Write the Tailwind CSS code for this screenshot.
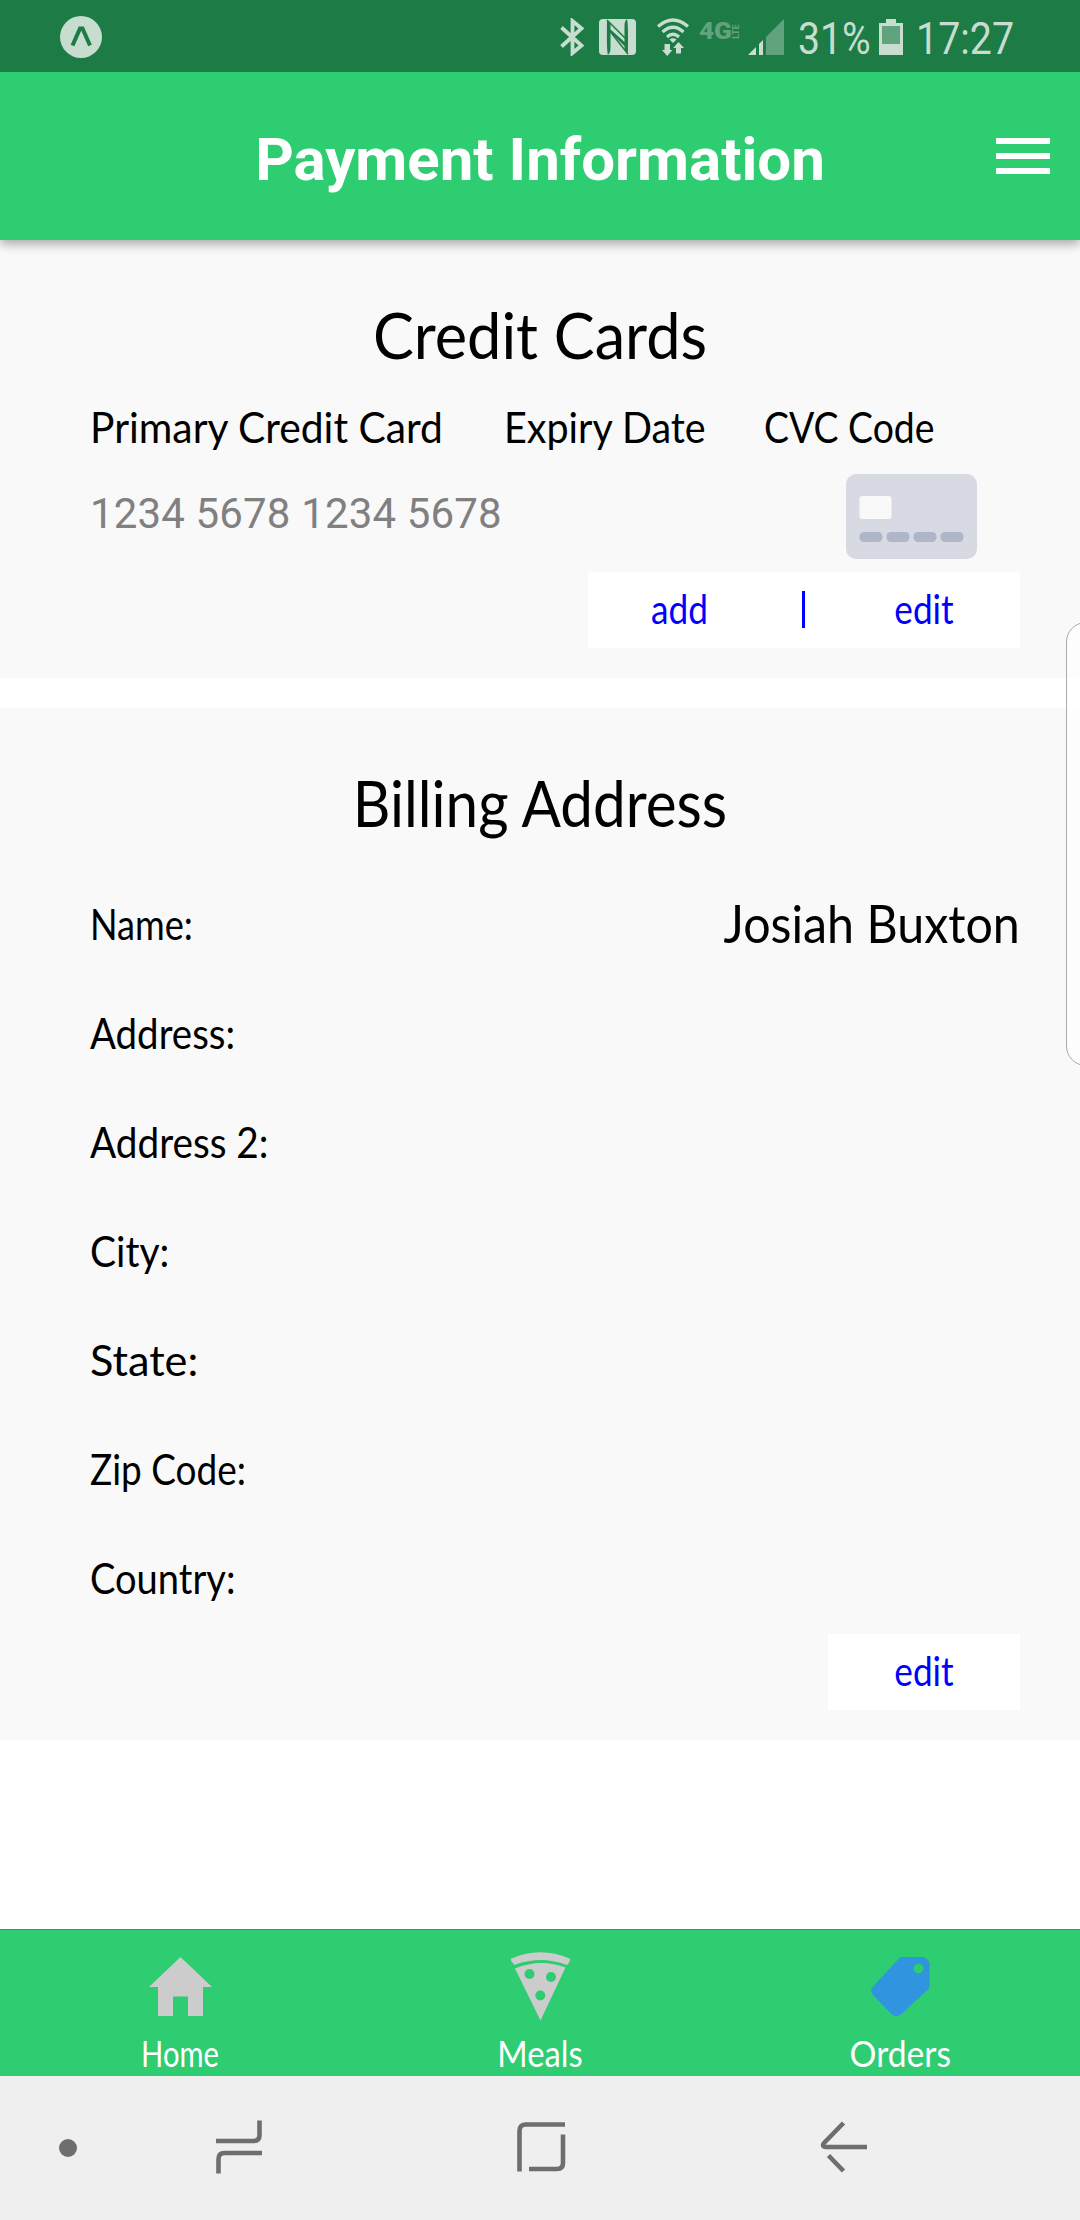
<!DOCTYPE html>
<html lang="en">
<head>
<meta charset="utf-8">
<title>Payment Information</title>
<script src="https://cdn.jsdelivr.net/npm/@tailwindcss/browser@4"></script>
</head>
<body class="w-[1080px] h-[2220px] overflow-hidden bg-white text-black font-['Lato',sans-serif] relative flex flex-col">

<!-- Status bar -->
<div class="h-[72px] shrink-0 bg-[#1d7b46] flex items-start relative z-20 text-[#c6ddcf] font-['Roboto',sans-serif]">
  <svg class="ml-[60px] mt-4 w-[42px] h-[42px]" viewBox="0 0 42 42"><circle cx="21" cy="21" r="21" fill="#c6ddcf"/><path d="M12.500 29.500L20 12.500H22.500L30 29.500" fill="none" stroke="#1d7b46" stroke-width="4"/></svg>
  <svg class="ml-[458px] mt-[18px] w-6 h-[38px]" viewBox="0 0 24 38" fill="none" stroke="#c6ddcf" stroke-width="3.800"><path d="M1.500 9.500L21.500 27.500L12.500 35V3L21.500 10.500L1.500 28.500"/></svg>
  <svg class="ml-[15px] mt-[19px] w-[37px] h-9" viewBox="0 0 37 36"><rect width="37" height="36" rx="4" fill="#c6ddcf"/><path d="M8 1L11.500 5V29C11.500 33 10.500 34.500 9 36C7.500 30 8 8 8 1ZM29 35L25.500 31V7C25.500 3 26.500 1.500 28 0C29.500 6 29 28 29 35ZM11.500 10.500L25.500 23V27L11.500 13.500Z" fill="#1d7b46"/><path d="M8 1L26 19M11.500 13L29 35" fill="none" stroke="#1d7b46" stroke-width="1.500"/></svg>
  <svg class="ml-[21px] mt-[18px] w-8 h-[38px]" viewBox="0 0 32 38" fill="none" stroke="#c6ddcf" stroke-width="3.200"><path d="M1 8.500Q16 -4.500 31 8.500M5.500 14Q16 4.500 26.500 14M10 19Q16 13.500 22 19"/><path d="M12.500 21.500Q16 19 19.500 21.500L16 25Z" fill="#c6ddcf" stroke="none"/><path d="M7.500 26H13V32H15.500L10.200 38L5 32H7.500ZM19 35.500H24V30H27L21.500 24L16.200 30H19Z" fill="#c6ddcf" stroke="none"/></svg>
  <div class="ml-[10px] mt-[23px] w-[41px] h-[17px] relative text-[#61a37c]">
    <span class="absolute left-0 top-0 text-[23px] leading-[17px] font-black origin-left scale-x-[1.130]">4G</span>
    <span class="absolute left-[27px] top-0 w-5 text-center text-[9px] leading-[17px] font-bold -rotate-90">LTE</span>
  </div>
  <svg class="ml-2 mt-[19px] w-9 h-9" viewBox="0 0 36 36"><path d="M0 36L8 28V36ZM11 36V25L15 21V36Z" fill="#c6ddcf"/><path d="M18 36V18L36 0V36Z" fill="#61a37c"/></svg>
  <span class="ml-[14px] mt-[12px] w-[72px] text-[45px] leading-[53px] whitespace-nowrap origin-left scale-x-[0.870]">31%</span>
  <svg class="ml-[9px] mt-[19px] w-6 h-9" viewBox="0 0 24 36"><path d="M7 0H17V4H24V36H0V4H7Z" fill="#c6ddcf"/><path d="M3 7H21V25H3Z" fill="#61a37c"/></svg>
  <span class="ml-[13px] mt-[12px] text-[45px] leading-[53px] whitespace-nowrap origin-left scale-x-[0.875]">17:27</span>
</div>

<!-- Header -->
<header class="h-[168px] shrink-0 bg-[#2ecd71] shadow-[0_4px_10px_rgba(0,0,0,0.330)] relative z-10 flex items-start justify-center text-white">
  <h1 class="pt-[53px] font-['Roboto',sans-serif] font-bold text-[60px] leading-[70px]">Payment Information</h1>
  <svg class="absolute right-[30px] top-[66px] w-[54px] h-9" viewBox="0 0 54 36" fill="#fff"><rect width="54" height="6"/><rect y="15" width="54" height="6"/><rect y="30" width="54" height="6"/></svg>
</header>

<!-- Credit cards -->
<section class="h-[438px] shrink-0 bg-[#f9f9f9] pt-[58px] pl-[90px] pr-[60px]">
  <h2 class="-ml-[30px] h-[72px] text-center text-[64px] leading-[74px] scale-x-[0.957]">Credit Cards</h2>
  <div class="mt-[31px] h-[50px] flex text-[42px] leading-[52px] whitespace-nowrap">
    <span class="w-[414px] origin-left scale-x-[0.972]">Primary Credit Card</span>
    <span class="w-[260px] origin-left scale-x-[0.940]">Expiry Date</span>
    <span class="origin-left scale-x-[0.890]">CVC Code</span>
  </div>
  <div class="mt-[23px] h-[85px] flex justify-between pr-[43px]">
    <span class="pt-[15px] font-['Roboto',sans-serif] text-[42px] leading-[50px] tracking-[0.150px] text-[#808080]">1234 5678 1234 5678</span>
    <svg class="w-[131px] h-[85px]" viewBox="0 0 131 85"><rect width="131" height="85" rx="10" fill="#d7dae2"/><rect x="13.500" y="22" width="32" height="23" rx="3" fill="#f9f9f9"/><g fill="#afb6c7"><rect x="13.500" y="58" width="23" height="10" rx="4.500"/><rect x="40.500" y="58" width="23" height="10" rx="4.500"/><rect x="67.500" y="58" width="23" height="10" rx="4.500"/><rect x="94.500" y="58" width="23" height="10" rx="4.500"/></g></svg>
  </div>
  <div class="mt-[13px] ml-auto w-[432px] h-[76px] bg-white flex items-start text-[40px] leading-[74px] text-[#0000ff] text-center">
    <span class="w-[183px] scale-x-[0.880]">add</span>
    <span class="flex-1 flex justify-center pt-[19px] pl-2"><span class="w-[3px] h-[37px] bg-[#0000ff]"></span></span>
    <span class="w-[192px] scale-x-[0.880]">edit</span>
  </div>
</section>

<!-- Billing address -->
<section class="mt-[30px] h-[1032px] shrink-0 bg-[#f9f9f9] pt-[58px] pl-[90px] pr-[60px]">
  <h2 class="-ml-[30px] h-[72px] text-center text-[64px] leading-[74px] scale-x-[0.912]">Billing Address</h2>
  <div class="mt-[31px] text-[42px] leading-[111px]">
    <div class="flex justify-between h-[109px]"><span class="origin-left scale-x-[0.860]">Name:</span><span class="text-[53px] leading-[108px] origin-right scale-x-[0.912]">Josiah Buxton</span></div>
    <div class="h-[109px] origin-left scale-x-[0.915]">Address:</div>
    <div class="h-[109px] origin-left scale-x-[0.922]">Address 2:</div>
    <div class="h-[109px] origin-left scale-x-[0.930]">City:</div>
    <div class="h-[109px] origin-left scale-x-[1.030]">State:</div>
    <div class="h-[109px] origin-left scale-x-[0.880]">Zip Code:</div>
    <div class="h-[109px] origin-left scale-x-[0.906]">Country:</div>
  </div>
  <div class="mt-[2px] ml-auto w-[192px] h-[76px] bg-white text-[40px] leading-[74px] text-[#0000ff] text-center"><span class="block scale-x-[0.880]">edit</span></div>
</section>

<!-- Edge panel handle -->
<div class="absolute left-[1066px] top-[622px] w-[40px] h-[444px] rounded-[20px] border-[1.500px] border-[#aaaaaa] bg-white/60"></div>

<!-- Tab bar -->
<nav class="mt-auto h-[147px] shrink-0 bg-[#2ecd71] border-t border-[#249d57] grid grid-cols-3 text-white text-[36px] leading-[44px]">
  <div class="flex flex-col items-center pt-[21px]">
    <svg class="w-[72px] h-[72px]" viewBox="144 1951 72 72"><path d="M180.500 1957L212 1987H203V2016H188V1996.500H173V2016H158V1987H149Z" fill="#ccc"/></svg>
    <span class="mt-2 scale-x-[0.810]">Home</span>
  </div>
  <div class="flex flex-col items-center pt-[21px]">
    <svg class="w-[72px] h-[72px]" viewBox="504 1951 72 72"><path d="M511.500 1958.500Q540.500 1946 569.500 1958.500Q570.500 1959 570 1960.500L568 1964Q567 1965.500 565.500 1964.500Q540.500 1955.500 515.500 1964.500Q514 1965 513.500 1964L511 1960.500Q510.500 1959 511.500 1958.500ZM515 1968.500Q540.500 1958 565.500 1967.500L540.500 2020.500Z" fill="#ccc"/><g fill="#2ecd71"><circle cx="529.500" cy="1974" r="5"/><circle cx="551" cy="1977" r="5"/><circle cx="540.300" cy="1995.500" r="5"/></g></svg>
    <span class="mt-2 scale-x-[0.910]">Meals</span>
  </div>
  <div class="flex flex-col items-center pt-[21px]">
    <svg class="w-[72px] h-[72px]" viewBox="864 1951 72 72"><path d="M901 1957H924.500L929.500 1962V1986.500L928.500 1989L901 2014.500Q896.500 2018 892 2014.500L872.500 1994.500Q869.500 1990.500 872.500 1987L899 1958.500Z" fill="#3095de"/><circle cx="918.500" cy="1968.500" r="4.800" fill="#2ecd71"/></svg>
    <span class="mt-2 scale-x-[0.935]">Orders</span>
  </div>
</nav>

<!-- System navigation -->
<div class="h-[144px] shrink-0 bg-[#efefef] flex items-center">
  <svg class="w-full h-full" viewBox="0 2076 1080 144" fill="none" stroke="#6e6e6e" stroke-width="4.600"><circle cx="68" cy="2148" r="9" fill="#6e6e6e" stroke="none"/><path d="M216 2141H253.500Q259.500 2141 259.500 2135V2120.500M262 2153H224.500Q218.500 2153 218.500 2159V2173.500"/><path d="M519.500 2171.500V2131Q519.500 2124.500 526 2124.500H565M563 2134.500V2163Q563 2169 557 2169H529"/><path d="M843.500 2123L824.500 2142.500C822 2145 823 2147 826 2147H867M828.500 2155.500L843.500 2171"/></svg>
</div>
</body>
</html>
